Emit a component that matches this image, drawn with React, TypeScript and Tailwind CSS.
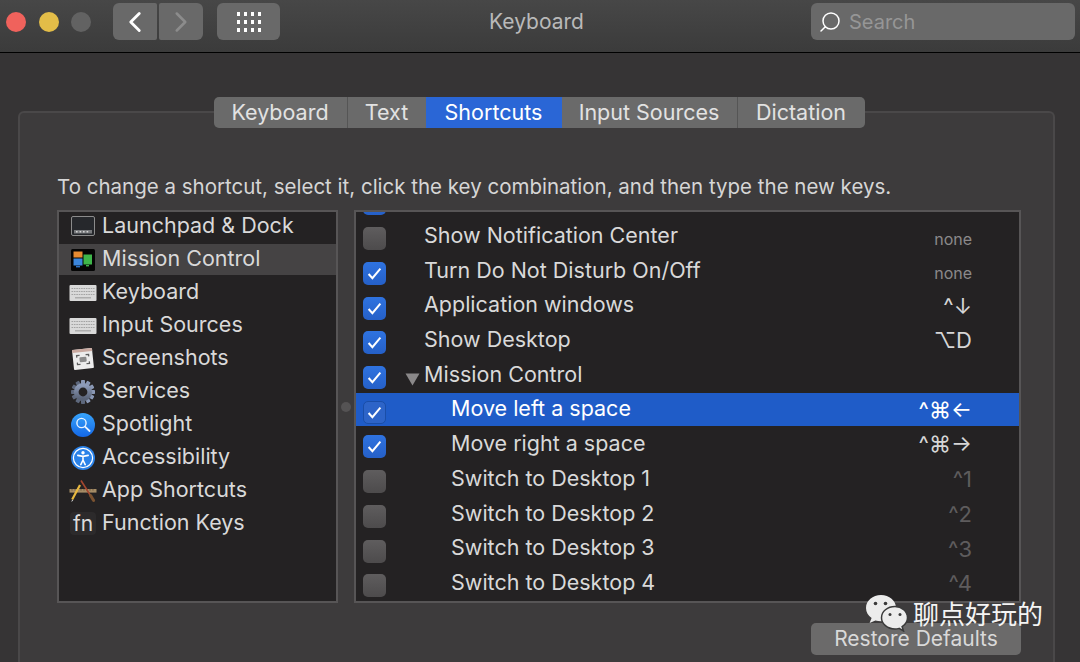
import { ChevronLeft, ChevronRight, Search } from "lucide-react";
import type { ReactNode } from "react";

const LaunchpadIcon = () => (
  <svg width="26" height="24" viewBox="0 0 26 24">
    <rect x="1.5" y="1.5" width="23" height="19" rx="1.5" fill="#26282c" stroke="#8b8b8b" strokeWidth="1" />
    <rect x="4" y="15" width="18" height="3.5" fill="#77797c" />
    <path d="M6 16.7h1.6M9.6 16.7h1.6M13 16.7h1.6M16.6 16.7h1.6" stroke="#d5d5d5" strokeWidth="1.4" />
  </svg>
);

const MissionIcon = () => (
  <svg width="26" height="24" viewBox="0 0 26 24">
    <rect x="1" y="1" width="24" height="22" rx="1.5" fill="#050505" />
    <rect x="3.5" y="3.5" width="9" height="6" fill="#e58a32" />
    <rect x="3.5" y="10.5" width="9" height="7" fill="#3b86dc" />
    <rect x="13.5" y="6.5" width="8.5" height="10" fill="#3fb64a" />
    <rect x="6" y="18" width="4" height="1.4" fill="#2f74c8" />
    <rect x="16" y="17" width="3" height="1.4" fill="#3fb64a" />
  </svg>
);

const KeyboardIcon = () => (
  <svg width="28" height="18" viewBox="0 0 28 18">
    <rect x="0.5" y="1" width="27" height="16" rx="1" fill="#d9d9d9" />
    <path d="M2.5 4.5h23M2.5 7.5h23M2.5 10.5h23" stroke="#a3a3a3" strokeWidth="1.2" strokeDasharray="1.6 0.8" />
    <path d="M6 13.8h16" stroke="#a3a3a3" strokeWidth="1.2" />
  </svg>
);

const ScreenshotIcon = () => (
  <svg width="26" height="24" viewBox="0 0 26 24">
    <g transform="rotate(-6 13 12)">
      <rect x="3" y="2" width="20" height="20" rx="1" fill="#ececec" />
      <rect x="3" y="2" width="20" height="3" fill="#c9a9a0" />
      <path d="M7 10V8h3M16 8h3v2M19 15v2h-3M10 17H7v-2" fill="none" stroke="#5c5c5c" strokeWidth="1.3" />
      <rect x="9.5" y="10" width="7" height="5" rx="1" fill="#8b8b8b" />
    </g>
  </svg>
);

const GearIcon = () => (
  <svg width="26" height="26" viewBox="0 0 26 26">
    <defs>
      <linearGradient id="gear" x1="0" y1="0" x2="0" y2="1">
        <stop offset="0" stopColor="#8d9bb8" />
        <stop offset="1" stopColor="#5a6478" />
      </linearGradient>
    </defs>
    {[0, 30, 60, 90, 120, 150].map((a) => (
      <rect key={a} x="11" y="1" width="4" height="24" rx="0.8" fill="url(#gear)" transform={`rotate(${a} 13 13)`} />
    ))}
    <circle cx="13" cy="13" r="6.6" fill="none" stroke="url(#gear)" strokeWidth="5" />
    <circle cx="13" cy="13" r="4.4" fill="#242223" />
  </svg>
);

const SpotlightIcon = () => (
  <svg width="26" height="26" viewBox="0 0 26 26">
    <defs>
      <linearGradient id="spot" x1="0" y1="0" x2="0" y2="1">
        <stop offset="0" stopColor="#38a3fa" />
        <stop offset="1" stopColor="#1467e6" />
      </linearGradient>
    </defs>
    <circle cx="13" cy="13" r="12" fill="url(#spot)" />
    <circle cx="11.5" cy="11" r="4.6" fill="none" stroke="#e8f3ff" strokeWidth="1.4" />
    <path d="M15 14.6l4.6 4.4" stroke="#e8f3ff" strokeWidth="1.8" strokeLinecap="round" />
  </svg>
);

const AccessibilityIcon = () => (
  <svg width="26" height="26" viewBox="0 0 26 26">
    <circle cx="13" cy="13" r="12" fill="#2b82e8" />
    <circle cx="13" cy="13" r="9.6" fill="none" stroke="#fff" strokeWidth="1.2" />
    <circle cx="13" cy="7.8" r="1.7" fill="#fff" />
    <path d="M7.8 10.4L13 11.4l5.2-1M13 11.4v4M13 15l-2.2 4.6M13 15l2.2 4.6" fill="none" stroke="#fff" strokeWidth="1.6" strokeLinecap="round" />
  </svg>
);

const AppShortcutsIcon = () => (
  <svg width="28" height="24" viewBox="0 0 28 24">
    <path d="M0.5 10h27v3.6H0.5z" fill="#a58c66" />
    <path d="M3 10v1.6M6 10v1.6M9 10v1.6M12 10v1.6M15 10v1.6M18 10v1.6M21 10v1.6M24 10v1.6" stroke="#5b4a35" strokeWidth="0.7" />
    <path d="M12 1.5l12 19" stroke="#a5472f" strokeWidth="1.6" />
    <path d="M21.6 16.5l3 5" stroke="#7a5230" strokeWidth="3" strokeLinecap="round" />
    <path d="M11 6L3.2 20.6" stroke="#e9b93f" strokeWidth="2.2" />
    <path d="M3.2 20.6l-1 2.4 2-1.6z" fill="#d8d8d8" />
  </svg>
);

const FnIcon = () => (
  <div className="flex h-[23px] w-[26px] items-center justify-center rounded-[4px] bg-[#2c2a2b] text-[21px] leading-none text-[#dcdcdc]">
    fn
  </div>
);

const categories: { name: string; icon: ReactNode; selected?: boolean }[] = [
  { name: "Launchpad & Dock", icon: <LaunchpadIcon /> },
  { name: "Mission Control", icon: <MissionIcon />, selected: true },
  { name: "Keyboard", icon: <KeyboardIcon /> },
  { name: "Input Sources", icon: <KeyboardIcon /> },
  { name: "Screenshots", icon: <ScreenshotIcon /> },
  { name: "Services", icon: <GearIcon /> },
  { name: "Spotlight", icon: <SpotlightIcon /> },
  { name: "Accessibility", icon: <AccessibilityIcon /> },
  { name: "App Shortcuts", icon: <AppShortcutsIcon /> },
  { name: "Function Keys", icon: <FnIcon /> },
];

type Shortcut = {
  label: string;
  keys?: string;
  checked?: boolean;
  indent?: boolean;
  expander?: boolean;
  selected?: boolean;
  kind?: "none" | "off";
};

const shortcuts: Shortcut[] = [
  { label: "", checked: true },
  { label: "Show Notification Center", keys: "none", kind: "none" },
  { label: "Turn Do Not Disturb On/Off", keys: "none", kind: "none", checked: true },
  { label: "Application windows", keys: "^↓", checked: true },
  { label: "Show Desktop", keys: "⌥D", checked: true },
  { label: "Mission Control", checked: true, expander: true },
  { label: "Move left a space", keys: "^⌘←", checked: true, indent: true, selected: true },
  { label: "Move right a space", keys: "^⌘→", checked: true, indent: true },
  { label: "Switch to Desktop 1", keys: "^1", indent: true, kind: "off" },
  { label: "Switch to Desktop 2", keys: "^2", indent: true, kind: "off" },
  { label: "Switch to Desktop 3", keys: "^3", indent: true, kind: "off" },
  { label: "Switch to Desktop 4", keys: "^4", indent: true, kind: "off" },
];

const Checkbox = ({ checked, onBlue }: { checked?: boolean; onBlue?: boolean }) => {
  if (!checked) {
    return <div className="mt-[5px] h-[23px] w-[23px] rounded-[5px] bg-gradient-to-b from-[#5f5d5e] to-[#4d4b4c]" />;
  }
  return (
    <div
      className={`mt-[5px] flex h-[23px] w-[23px] items-center justify-center rounded-[5px] ${
        onBlue ? "border border-[#1a4ea8] bg-[#2d64c8]" : "bg-gradient-to-b from-[#2f73e0] to-[#2560c8]"
      }`}
    >
      <svg width="15" height="13" viewBox="0 0 15 13">
        <path d="M1.6 7l3.8 4.2L13.4 1.6" fill="none" stroke="#fff" strokeWidth="2" />
      </svg>
    </div>
  );
};

const ShortcutRow = ({ row }: { row: Shortcut }) => {
  const keyClass =
    row.kind === "none"
      ? "text-[16px] text-[#8b898a] pr-[2px] pt-[5px]"
      : row.kind === "off"
        ? "text-[22px] text-[#5e5c5d]"
        : row.selected
          ? "text-[22px] text-white"
          : "text-[22px] text-[#d6d6d6]";
  return (
    <div className="flex h-[34.72px] items-center">
      <div className={`flex h-[33px] w-full items-center ${row.selected ? "bg-[#1f5cc8]" : ""}`}>
        <div className="ml-[7px] w-[23px]">
          <Checkbox checked={row.checked} onBlue={row.selected} />
        </div>
        <div className={`flex min-w-0 flex-1 items-center ${row.indent ? "pl-[65px]" : "pl-[38px]"} relative`}>
          {row.expander && (
            <svg className="absolute left-[19px] top-[8px]" width="15" height="13" viewBox="0 0 15 13">
              <path d="M0.5 0.5h14L7.5 12.5z" fill="#8a8889" />
            </svg>
          )}
          <span className={`-mt-[1px] text-[21.5px] leading-none ${row.selected ? "text-white" : "text-[#d9d9d9]"}`}>
            {row.label}
          </span>
        </div>
        {row.keys && <div className={`pr-[47px] leading-none ${keyClass}`}>{row.keys}</div>}
      </div>
    </div>
  );
};

const tabs = [
  { name: "Keyboard", w: "w-[134px]" },
  { name: "Text", w: "w-[78px]" },
  { name: "Shortcuts", w: "w-[136px]", active: true },
  { name: "Input Sources", w: "w-[176px]" },
  { name: "Dictation", w: "w-[127px]" },
];

const WeChatMark = () => (
  <svg width="44" height="38" viewBox="0 0 44 38">
    <path d="M16 1C7.7 1 1 6.6 1 14c0 4.2 2.2 7.6 5.6 10L4.6 29l5.8-2.6c1.8.5 3.6.8 5.6.8 8.300 0 15-5.800 15-13.200S24.300 1 16 1z" fill="#ececec" />
    <circle cx="10.500" cy="9.500" r="1.800" fill="#3a3a3a" />
    <circle cx="20.500" cy="9.500" r="1.800" fill="#3a3a3a" />
    <path d="M30 12.500c-7.500 0-13.500 5-13.500 11.200S22.500 35 30 35c1.500 0 2.800-.2 4.100-.6l4.400 2.600-1.400-4.400c3.300-2.100 5.400-5.300 5.400-8.900 0-6.200-5.900-11.200-12.500-11.200z" fill="#ececec" stroke="#3a3a3a" strokeWidth="1.500" />
    <circle cx="25" cy="20.500" r="1.500" fill="#3a3a3a" />
    <circle cx="35" cy="20.500" r="1.500" fill="#3a3a3a" />
  </svg>
);

export default function App() {
  return (
    <div className="relative flex h-[662px] w-[1080px] flex-col overflow-hidden bg-[#363435] font-['Inter',sans-serif]">
      <div className="flex h-[53px] shrink-0 items-start border-b border-black bg-gradient-to-b from-[#474747] to-[#3b3b3b] pt-[3px]">
        <div className="ml-[6px] mt-[9px] flex gap-[12.500px]">
          <div className="h-[20px] w-[20px] rounded-full bg-[#f0625c]" />
          <div className="h-[20px] w-[20px] rounded-full bg-[#e3bd48]" />
          <div className="h-[20px] w-[20px] rounded-full bg-[#626262]" />
        </div>
        <div className="ml-[22px] flex h-[37px] w-[44px] items-center justify-center rounded-l-[6px] rounded-r-[2px] bg-[#696969]">
          <ChevronLeft size={34} strokeWidth={2} className="text-white" />
        </div>
        <div className="ml-[2px] flex h-[37px] w-[44px] items-center justify-center rounded-l-[2px] rounded-r-[6px] bg-[#696969]">
          <ChevronRight size={34} strokeWidth={1.800} className="text-[#8c8c8c]" />
        </div>
        <div className="ml-[14px] grid h-[37px] w-[63px] place-content-center rounded-[6px] bg-[#696969]">
          <div className="grid grid-cols-4 gap-x-[4px] gap-y-[4px]">
            {Array.from({ length: 12 }).map((_, i) => (
              <div key={i} className="h-[4px] w-[3px] bg-white" />
            ))}
          </div>
        </div>
        <div className="flex h-[37px] flex-1 items-center justify-center pr-[18px] text-[21px] text-[#b9b9b9]">Keyboard</div>
        <div className="mr-[5px] flex h-[37px] w-[264px] items-center rounded-[6px] bg-[#696969] pl-[7px]">
          <Search size={24} strokeWidth={1.500} className="text-white" style={{ transform: "scaleX(-1)" }} />
          <span className="ml-[7px] text-[20px] text-[#969696]">Search</span>
        </div>
      </div>

      <div className="flex min-h-0 flex-1 flex-col pl-[18px] pr-[25px] pt-[58px]">
        <div className="min-h-0 flex-1 rounded-t-[6px] border-2 border-b-0 border-[#4a4849] bg-[#3d3b3c] pl-[37px] pr-[32px]">
          <div className="-mt-[16px] flex justify-center">
            <div className="flex h-[31px] overflow-hidden rounded-[5px] bg-[#6a6a6a]">
              {tabs.map((t, i) => (
                <div
                  key={t.name}
                  className={`flex items-center justify-center text-[21.500px] ${t.w} ${
                    t.active ? "bg-[#2a66d6] text-white" : "text-[#e2e2e2]"
                  } ${i === 0 || i === 3 ? "border-r border-[#555]" : ""}`}
                >
                  {t.name}
                </div>
              ))}
            </div>
          </div>

          <div className="mt-[47px] h-[24px] text-[20.500px] leading-[24px] text-[#d6d6d6]">
            To change a shortcut, select it, click the key combination, and then type the new keys.
          </div>

          <div className="mt-[11px] flex h-[393px]">
            <div className="w-[281px] overflow-hidden border-2 border-[#575556] bg-[#242223]">
              <div className="-mt-[1px]">
                {categories.map((c) => (
                  <div
                    key={c.name}
                    className={`mb-[2px] flex h-[31px] items-center ${c.selected ? "bg-[#454344]" : ""}`}
                  >
                    <div className="flex w-[43px] justify-center pl-[5px]">{c.icon}</div>
                    <span className="-mt-[1px] text-[21.500px] leading-none text-[#d9d9d9]">{c.name}</span>
                  </div>
                ))}
              </div>
            </div>
            <div className="flex w-[16px] items-center justify-center">
              <div className="h-[10px] w-[10px] rounded-full bg-[#555354]" />
            </div>
            <div className="w-[667px] overflow-hidden border-2 border-[#575556] bg-[#242223]">
              <div className="-mt-[28px]">
                {shortcuts.map((r, i) => (
                  <ShortcutRow key={i} row={r} />
                ))}
              </div>
            </div>
          </div>

          <div className="mt-[20px] flex justify-end">
            <div className="flex h-[32px] w-[210px] items-center justify-center rounded-[5px] bg-[#6b6a6a] text-[21px] text-[#d9d9d9]">
              Restore Defaults
            </div>
          </div>
        </div>
      </div>

      <div className="absolute left-[865px] top-[594px] flex items-start">
        <WeChatMark />
        <span className="ml-[4px] mt-[3px] font-['Noto_Sans_CJK_SC',sans-serif] text-[26px] leading-[32px] text-[#f4f4f4]">
          聊点好玩的
        </span>
      </div>
    </div>
  );
}
